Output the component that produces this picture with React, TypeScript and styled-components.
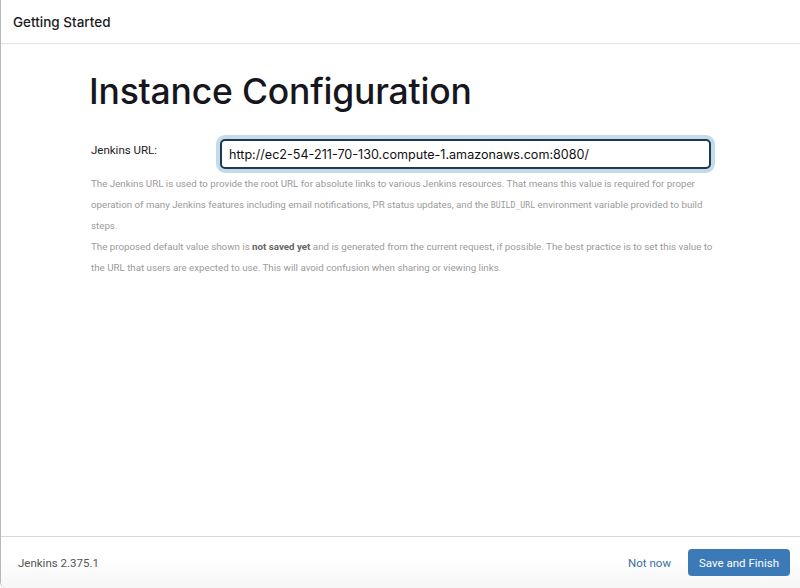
import styled, { createGlobalStyle } from 'styled-components';

const GlobalStyle = createGlobalStyle`
    html, body {
        margin: 0;
        padding: 0;
        background: #fff;
    }
    body {
        font-family: Roboto, "Liberation Sans", sans-serif;
        color: #212529;
    }
`;

const Modal = styled.div`
    width: 800px;
    height: 588px;
    box-sizing: border-box;
    display: flex;
    flex-direction: column;
    border-left: 1px solid #b8b8b8;
    border-bottom-left-radius: 6px;
    background: #fff;
    overflow: hidden;
`;

const Header = styled.header`
    height: 44px;
    box-sizing: border-box;
    flex: none;
    display: flex;
    align-items: center;
    padding: 0 12px;
    border-bottom: 1px solid #e2e2e2;
    font-family: Inter, Roboto, sans-serif;
    font-size: 13.5px;
    font-weight: 500;
    color: #1b1b1f;
`;

const Body = styled.section`
    flex: 1;
    padding: 24px 86px 0 88px;
`;

const Title = styled.h1`
    margin: 0 0 23px;
    font-family: Inter, Roboto, sans-serif;
    font-size: 35.5px;
    line-height: 48px;
    font-weight: 500;
    letter-spacing: -0.2px;
    color: #16161c;
`;

const FieldRow = styled.div`
    display: grid;
    grid-template-columns: 131px 491px;
    align-items: start;
`;

const Label = styled.label`
    padding: 4px 0 0 2px;
    font-size: 11.5px;
    color: #222;
`;

const UrlInput = styled.input`
    box-sizing: border-box;
    height: 30px;
    width: 100%;
    padding: 0 7px;
    border: 2px solid #1d3a52;
    border-radius: 5px;
    box-shadow: 0 0 0 4px #c4dbeb;
    font-family: Inter, Roboto, sans-serif;
    font-size: 12.6px;
    color: #111;
    outline: none;
`;

const Help = styled.div`
    margin-top: 4px;
    padding-left: 2px;
    font-size: 9.75px;
    line-height: 21px;
    color: #9a9a9a;

    p {
        margin: 0;
    }
    code {
        font-family: "DejaVu Sans Mono", "Liberation Mono", monospace;
        font-size: 8.2px;
        line-height: 1;
    }
    strong {
        color: #666;
        font-weight: 700;
        line-height: 1;
    }
`;

const Footer = styled.footer`
    height: 51px;
    flex: none;
    display: flex;
    align-items: center;
    gap: 17px;
    padding: 0 10px 0 17px;
    border-top: 1px solid #d8d8d8;
    background: linear-gradient(#fff 40%, #f6f6f6);
`;

const Version = styled.span`
    flex: 1;
    font-size: 11.5px;
    color: #555;
`;

const LinkButton = styled.a`
    font-size: 11.5px;
    color: #3a6fa0;
    cursor: pointer;
`;

const PrimaryButton = styled.button`
    height: 27px;
    padding: 0 11px;
    border: none;
    border-radius: 4px;
    background: #3b7ab6;
    color: #fff;
    font-family: inherit;
    font-size: 11.5px;
    cursor: pointer;
`;

export default function App() {
    return (
        <Modal>
            <GlobalStyle />
            <Header>Getting Started</Header>
            <Body>
                <Title>Instance Configuration</Title>
                <FieldRow>
                    <Label htmlFor="jenkins-url">Jenkins URL:</Label>
                    <UrlInput
                        id="jenkins-url"
                        defaultValue="http://ec2-54-211-70-130.compute-1.amazonaws.com:8080/"
                    />
                </FieldRow>
                <Help>
                    <p>
                        The Jenkins URL is used to provide the root URL for absolute links to various Jenkins
                        resources. That means this value is required for proper operation of many Jenkins
                        features including email notifications, PR status updates, and the <code>BUILD_URL</code>{' '}
                        environment variable provided to build steps.
                    </p>
                    <p>
                        The proposed default value shown is <strong>not saved yet</strong> and is generated from
                        the current request, if possible. The best practice is to set this value to the URL
                        that users are expected to use. This will avoid confusion when sharing or viewing links.
                    </p>
                </Help>
            </Body>
            <Footer>
                <Version>Jenkins 2.375.1</Version>
                <LinkButton>Not now</LinkButton>
                <PrimaryButton>Save and Finish</PrimaryButton>
            </Footer>
        </Modal>
    );
}
